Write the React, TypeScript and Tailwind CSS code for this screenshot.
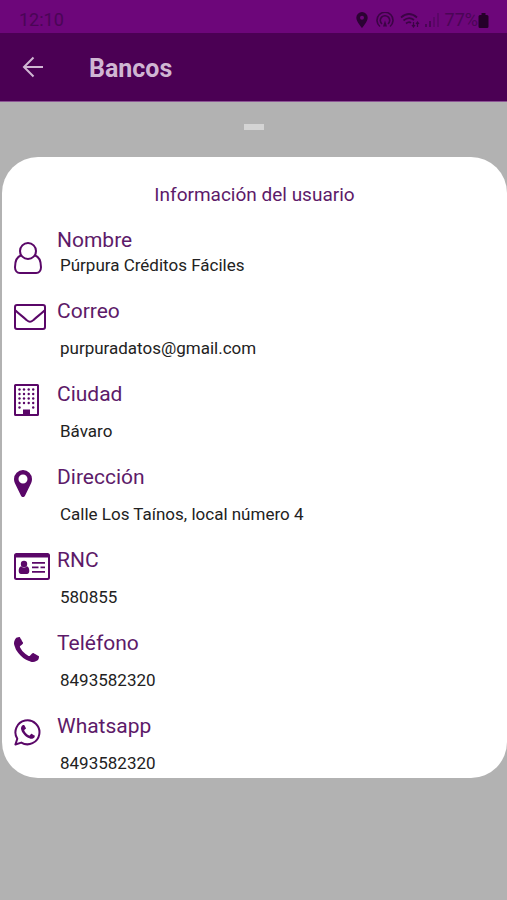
import React from 'react';

interface InfoItem {
  label: string;
  value: string;
  icon: React.ReactNode;
}

const HANDSET =
  'M1408 1112q0 27-10 70.500t-21 68.500q-21 50-122 106-94 51-186 51-27 0-53-3.500t-57.500-12.500-47-14.500-55.500-20.500-49-18q-98-35-175-83-127-79-264-216t-216-264q-48-77-83-175-3-9-18-49t-20.500-55.500-14.500-47-12.500-57.500-3.500-53q0-92 51-186 56-101 106-122 25-11 68.500-21t70.500-10q14 0 21 3 18 6 53 76 11 19 30 54t35 63.500 31 53.500q3 4 17.500 25t21.500 35.500 7 28.500q0 20-28.500 50t-62 55-62 53-28.500 46q0 9 5 22.500t8.500 20.500 14 24 11.500 19q76 137 174 235t235 174q2 1 19 11.500t24 14 20.500 8.500 22.500 5q18 0 46-28.500t53-62 55-62 50-28.500q14 0 28.500 7t35.500 21.500 25 17.500q25 15 53.500 31t63.500 35 54 30q70 35 76 53 3 7 3 21z';

const UserIcon = () => (
  <svg width="28" height="32" viewBox="0 0 28 32" fill="none" stroke="currentColor" strokeWidth="2">
    <circle cx="14" cy="9" r="8" />
    <path d="M7.2 13.2C3 14.6 1 19 1 25.300C1 28.500 3 31 5.800 31H22.200C25 31 27 28.500 27 25.300C27 19 25 14.600 20.800 13.200" />
  </svg>
);

const EnvelopeIcon = () => (
  <svg width="32" height="26" viewBox="0 0 32 26" fill="none" stroke="currentColor" strokeWidth="2" strokeLinejoin="round">
    <rect x="1" y="1" width="30" height="24" rx="2" />
    <path d="M1.500 6.500C5 10 9.500 13 12.500 16C14 17.200 15 17.800 16 17.800S18 17.200 19.500 16C22.500 13 27 10 30.500 6.500" />
  </svg>
);

const BuildingIcon = () => (
  <svg width="25" height="32" viewBox="0 0 25 32" fill="none">
    <rect x="1" y="1" width="23" height="30" rx="0.5" stroke="currentColor" strokeWidth="2" />
    {[5.5, 10, 14.5, 19, 23.5].map(y =>
      [5.5, 10, 14.7, 19.2].map(x => {
        // the door takes the place of the two middle windows
        if (y === 23.5 && x > 6 && x < 19) return null;
        return <circle key={`${x}-${y}`} cx={x} cy={y} r="1.2" fill="currentColor" />;
      })
    )}
    <path d="M9 25.500h7V31H9z" fill="currentColor" />
  </svg>
);

const MarkerIcon = () => (
  <svg width="18" height="27" viewBox="0 0 18 27" fill="currentColor">
    <path fillRule="evenodd" d="M9 0a9 9 0 0 1 9 9c0 1.500-.200 2.800-.800 4L11 25.700C10.600 26.500 9.800 27 9 27s-1.600-.500-2-1.300L.800 13C.200 11.800 0 10.500 0 9a9 9 0 0 1 9-9zm0 4.500a4.500 4.500 0 1 0 0 9 4.500 4.500 0 0 0 0-9z" />
  </svg>
);

const IdCardIcon = () => (
  <svg width="36" height="27" viewBox="0 0 36 27" fill="currentColor">
    <path fillRule="evenodd" d="M2.500 0h31A2.500 2.500 0 0 1 36 2.500v22a2.500 2.500 0 0 1-2.500 2.500h-31A2.500 2.500 0 0 1 0 24.500v-22A2.500 2.500 0 0 1 2.500 0zM2 4.500v20c0 .300.200.500.500.500h31c.300 0 .500-.200.500-.500v-20z" />
    <circle cx="10" cy="11" r="3.200" />
    <path d="M7.300 13.200c.700.800 1.600 1.300 2.700 1.300s2-.500 2.700-1.300c1.800.200 2.600 2.200 2.600 4.800 0 1.900-1 3-2.300 3H7c-1.300 0-2.300-1.100-2.300-3 0-2.600.800-4.600 2.600-4.800z" />
    <path d="M18 9h13v1.800H18zM18 13.500h6.500v1.800H18zM26.500 13.500H31v1.800h-4.500zM18 18h13v1.800H18z" />
  </svg>
);

const PhoneIcon = () => (
  <svg width="25" height="25" viewBox="0 0 1408 1408" fill="currentColor">
    <path d={HANDSET} />
  </svg>
);

const WhatsappIcon = () => (
  <svg width="28" height="28" viewBox="0 0 28 28" fill="none">
    <path
      d="M7.300 24.600L1.400 26.500L3.300 20.700A12 12 0 1 1 7.300 24.600z"
      stroke="currentColor"
      strokeWidth="2"
      strokeLinejoin="round"
    />
    <path d={HANDSET} fill="currentColor" transform="translate(7 7) scale(.0098)" />
  </svg>
);

const items: InfoItem[] = [
  { label: 'Nombre', value: 'Púrpura Créditos Fáciles', icon: <UserIcon /> },
  { label: 'Correo', value: 'purpuradatos@gmail.com', icon: <EnvelopeIcon /> },
  { label: 'Ciudad', value: 'Bávaro', icon: <BuildingIcon /> },
  { label: 'Dirección', value: 'Calle Los Taínos, local número 4', icon: <MarkerIcon /> },
  { label: 'RNC', value: '580855', icon: <IdCardIcon /> },
  { label: 'Teléfono', value: '8493582320', icon: <PhoneIcon /> },
  { label: 'Whatsapp', value: '8493582320', icon: <WhatsappIcon /> },
];

const StatusBar = () => (
  <div className="flex h-[33px] items-center justify-between bg-[#6d067a] pt-1.5 pr-[18px] pl-[19px] text-lg text-[#4a0556]">
    <span>12:10</span>
    <div className="flex items-center">
      <svg width="12" height="16" viewBox="0 0 12 16" fill="#2b0233" className="mr-2">
        <path fillRule="evenodd" d="M6 0a5.700 5.700 0 0 1 5.700 5.700C11.700 9.500 6 16 6 16S.300 9.500.300 5.700A5.700 5.700 0 0 1 6 0zm0 3.700a2 2 0 1 0 0 4 2 2 0 0 0 0-4z" />
      </svg>
      <svg width="18" height="16" viewBox="0 0 18 16" fill="none" stroke="#3b0445" strokeWidth="1.600" className="mr-1.5">
        <path d="M4 14.500A8 8 0 1 1 14 14.500M6 12a4.700 4.700 0 1 1 6 0" />
        <path d="M9 8.500l2 6H7z" fill="#3b0445" stroke="none" />
      </svg>
      <svg width="20" height="16" viewBox="0 0 20 16" fill="none" stroke="#3b0445" strokeWidth="1.700" className="mr-1">
        <path d="M1 5.500Q9 -1.500 17 5.500M3.500 8.500Q9 4 14 8M6 11.500Q9 9 11 11" />
        <path d="M13.500 10v5M12 13l1.500 2 1.500-2M17.500 15v-5M16 12l1.500-2 1.500 2" strokeWidth="1.200" />
      </svg>
      <svg width="15" height="16" viewBox="0 0 15 16" fill="#4a0556" className="mr-1.5">
        <path d="M1 12h2v3H1zM5 9h2v6H5z" />
        <path d="M9 5h2v10H9zM13 1h2v14h-2z" opacity=".5" />
      </svg>
      <span>77%</span>
      <svg width="11" height="16" viewBox="0 0 11 16" fill="#250029">
        <path d="M3.500 1h4v2H9a1.500 1.500 0 0 1 1.500 1.500v10A1.500 1.500 0 0 1 9 16H2a1.500 1.500 0 0 1-1.500-1.500v-10A1.500 1.500 0 0 1 2 3h1.500z" />
      </svg>
    </div>
  </div>
);

const App: React.FC = () => {
  return (
    <div className="min-h-screen bg-[#b2b2b2] font-[Roboto,sans-serif]">
      <StatusBar />
      <header className="flex h-[69px] items-center border-b border-[#8c5594] bg-[#4b0054] pl-[22px] text-[#d0b6d3]">
        <button type="button" aria-label="Volver" className="mr-[45px]">
          <svg width="22" height="22" viewBox="0 0 22 22" fill="none" stroke="currentColor" strokeWidth="2">
            <path d="M21 11H2.500M11.500 1.500L2 11l9.500 9.500" />
          </svg>
        </button>
        <h1 className="pt-1 text-[25px] leading-8 font-bold">Bancos</h1>
      </header>

      <div className="mx-auto mt-[22px] h-1.5 w-5 bg-[#d4d4d4]" />

      <main className="mt-[27px] ml-0.5 rounded-[36px] bg-white px-3 pt-[26px] pb-[3px]">
        <h2 className="text-center text-[19px] leading-6 text-[#5d1a69]">Información del usuario</h2>
        <dl className="mt-5 space-y-[21px]">
          {items.map((item, index) => (
            <div key={item.label} className="flex">
              <div className={`flex h-[38px] w-[43px] shrink-0 items-center text-[#5a0768] ${index === 0 ? 'mt-3' : ''}`}>
                {item.icon}
              </div>
              <div>
                <dt className="text-[21px] leading-[26px] text-[#5d1a69]">{item.label}</dt>
                <dd className={`pl-[3px] text-[17px] leading-6 text-[#222222] ${index === 0 ? '' : 'mt-3'}`}>{item.value}</dd>
              </div>
            </div>
          ))}
        </dl>
      </main>
    </div>
  );
};

export default App;
